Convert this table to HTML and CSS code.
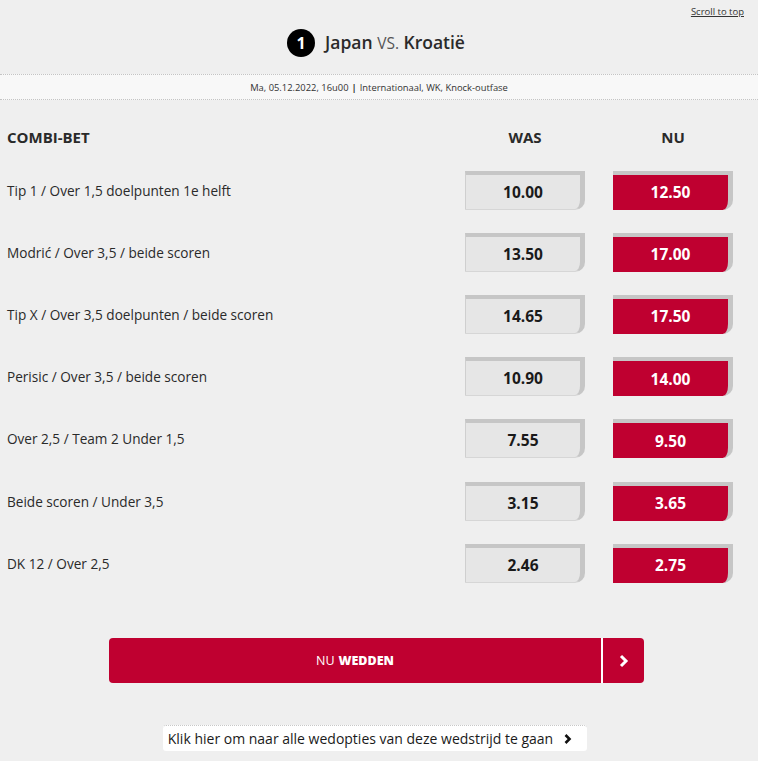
FILE: index.html
```html
<!DOCTYPE html>
<html lang="nl">
<head>
<meta charset="utf-8">
<title>Japan vs. Kroatië</title>
<link rel="stylesheet" href="styles.css">
</head>
<body>
<div class="page">
  <header class="match-head">
    <a class="scroll-top" href="#">Scroll to top</a>
    <h1 class="title"><span class="num">1</span><span class="teams"><strong>Japan</strong> <span class="vs">VS.</span> <strong>Kroatië</strong></span></h1>
  </header>
  <div class="info">Ma, 05.12.2022, 16u00 <b>|</b> Internationaal, WK, Knock-outfase</div>

  <div class="table">
    <div class="row head">
      <div class="label">COMBI-BET</div>
      <div class="col">WAS</div>
      <div class="col">NU</div>
    </div>
    <div class="row"><div class="label">Tip 1 / Over 1,5 doelpunten 1e helft</div><div class="odd was">10.00</div><div class="odd nu">12.50</div></div>
    <div class="row"><div class="label">Modrić / Over 3,5 / beide scoren</div><div class="odd was">13.50</div><div class="odd nu">17.00</div></div>
    <div class="row"><div class="label">Tip X / Over 3,5 doelpunten / beide scoren</div><div class="odd was">14.65</div><div class="odd nu">17.50</div></div>
    <div class="row"><div class="label">Perisic / Over 3,5 / beide scoren</div><div class="odd was">10.90</div><div class="odd nu">14.00</div></div>
    <div class="row"><div class="label">Over 2,5 / Team 2 Under 1,5</div><div class="odd was">7.55</div><div class="odd nu">9.50</div></div>
    <div class="row"><div class="label">Beide scoren / Under 3,5</div><div class="odd was">3.15</div><div class="odd nu">3.65</div></div>
    <div class="row"><div class="label">DK 12 / Over 2,5</div><div class="odd was">2.46</div><div class="odd nu">2.75</div></div>
  </div>

  <div class="cta-wrap">
    <a class="cta" href="#">
      <span class="cta-text">NU <b>WEDDEN</b></span>
      <span class="cta-arrow"><svg width="12" height="14" viewBox="0 0 12 14"><polyline points="3,2 8,7 3,12" fill="none" stroke="#fff" stroke-width="3"/></svg></span>
    </a>
  </div>

  <div class="more-wrap">
    <a class="more" href="#">Klik hier om naar alle wedopties van deze wedstrijd te gaan <svg width="10" height="12" viewBox="0 0 10 12"><polyline points="2.5,2 6.5,6 2.5,10" fill="none" stroke="#111" stroke-width="2.6"/></svg></a>
  </div>
</div>
</body>
</html>
```
FILE: styles.css
```css
* { box-sizing: border-box; }
html, body { margin: 0; padding: 0; }
body {
  background: #efefef;
  font-family: "Open Sans", "Noto Sans", sans-serif;
  color: #2a2a2a;
  width: 758px;
  height: 761px;
  overflow: hidden;
}
.page { display: flex; flex-direction: column; }

.match-head {
  height: 74px;
  display: flex;
  flex-direction: column;
  align-items: center;
}
.scroll-top {
  align-self: flex-end;
  margin: 6px 14px 0 0;
  font-size: 9.5px;
  color: #333;
  text-decoration: underline;
  line-height: 12px;
}
.title {
  margin: 10px 0 0 -6px;
  display: flex;
  align-items: center;
  font-size: 17.5px;
  font-weight: 400;
  color: #2a2a2a;
  line-height: 28px;
}
.teams { white-space: pre; }
.title strong { font-weight: 600; }
.vs { color: #555; font-size: 15.5px; }
.num {
  width: 28px;
  height: 28px;
  border-radius: 50%;
  background: #000;
  color: #fff;
  font-weight: 700;
  font-size: 16px;
  display: flex;
  align-items: center;
  justify-content: center;
  margin-right: 10px;
}

.info {
  height: 26px;
  background: #f8f8f8;
  border-top: 1px dotted #c4c4c4;
  border-bottom: 1px dotted #c4c4c4;
  font-size: 9.4px;
  color: #333;
  display: flex;
  align-items: center;
  justify-content: center;
}
.info b { margin: 0 3px; font-weight: 700; }

.table { padding: 15px 25px 0 7px; }
.row {
  display: grid;
  grid-template-columns: 1fr 120px 120px;
  column-gap: 28px;
  align-items: center;
  height: 62.2px;
}
.row.head { height: 44px; }
.label { font-size: 13.6px; color: #2a2a2a; }
.head .label { font-size: 15px; font-weight: 700; }
.head .col { text-align: center; font-size: 15px; font-weight: 700; }

.odd {
  height: 39px;
  display: flex;
  align-items: center;
  justify-content: center;
  font-size: 15.5px;
  font-weight: 700;
  border-top: 4px solid #c6c6c6;
  border-right: 5px solid #c6c6c6;
  border-bottom-right-radius: 10px;
}
.odd.was {
  background: #e6e6e6;
  color: #1a1a1a;
  border-left: 1px solid #cfcfcf;
  border-bottom: 1px solid #d6d6d6;
}
.odd.nu {
  background: #bf0030;
  color: #fff;
}

.cta-wrap { display: flex; justify-content: center; padding: 44px 114px 0 109px; }
.cta {
  flex: 1;
  height: 45px;
  display: flex;
  background: #bf0030;
  border-radius: 4px;
  color: #fff;
  text-decoration: none;
  overflow: hidden;
}
.cta-text {
  flex: 1;
  display: flex;
  align-items: center;
  justify-content: center;
  font-size: 12.5px;
  border-right: 2px solid #fff;
}
.cta-text b { margin-left: 4px; font-weight: 800; }
.cta-arrow {
  width: 41px;
  display: flex;
  align-items: center;
  justify-content: center;
}

.more-wrap { display: flex; justify-content: center; padding: 42px 0 0 0; margin-left: -8px; }
.more {
  height: 26px;
  display: flex;
  align-items: center;
  gap: 10px;
  padding: 0 14px 0 5px;
  background: #fff;
  border-top: 1px dotted #c8c8c8;
  border-radius: 3px;
  font-size: 14px;
  color: #1a1a1a;
  text-decoration: none;
}
```
